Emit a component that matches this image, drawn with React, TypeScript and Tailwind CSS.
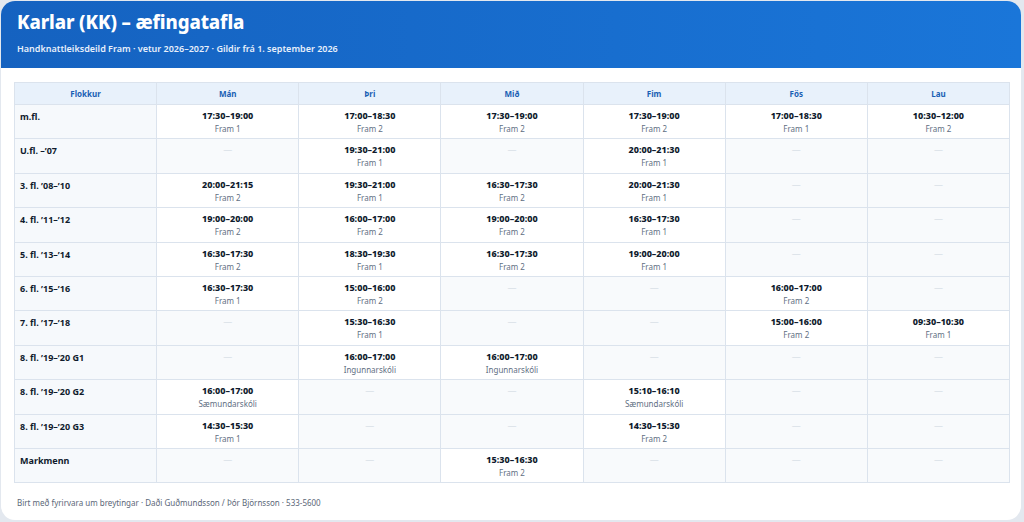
import React from "react";

type Cell = [string, string] | null;

const rows: { label: string; cells: Cell[] }[] = [
  {
    label: "m.fl.",
    cells: [
      ["17:30–19:00", "Fram 1"],
      ["17:00–18:30", "Fram 2"],
      ["17:30–19:00", "Fram 2"],
      ["17:30–19:00", "Fram 2"],
      ["17:00–18:30", "Fram 1"],
      ["10:30–12:00", "Fram 2"],
    ],
  },
  {
    label: "U.fl. –’07",
    cells: [null, ["19:30–21:00", "Fram 1"], null, ["20:00–21:30", "Fram 1"], null, null],
  },
  {
    label: "3. fl. ’08–’10",
    cells: [
      ["20:00–21:15", "Fram 2"],
      ["19:30–21:00", "Fram 1"],
      ["16:30–17:30", "Fram 2"],
      ["20:00–21:30", "Fram 1"],
      null,
      null,
    ],
  },
  {
    label: "4. fl. ’11–’12",
    cells: [
      ["19:00–20:00", "Fram 2"],
      ["16:00–17:00", "Fram 2"],
      ["19:00–20:00", "Fram 2"],
      ["16:30–17:30", "Fram 1"],
      null,
      null,
    ],
  },
  {
    label: "5. fl. ’13–’14",
    cells: [
      ["16:30–17:30", "Fram 2"],
      ["18:30–19:30", "Fram 1"],
      ["16:30–17:30", "Fram 2"],
      ["19:00–20:00", "Fram 1"],
      null,
      null,
    ],
  },
  {
    label: "6. fl. ’15–’16",
    cells: [
      ["16:30–17:30", "Fram 1"],
      ["15:00–16:00", "Fram 2"],
      null,
      null,
      ["16:00–17:00", "Fram 2"],
      null,
    ],
  },
  {
    label: "7. fl. ’17–’18",
    cells: [
      null,
      ["15:30–16:30", "Fram 1"],
      null,
      null,
      ["15:00–16:00", "Fram 2"],
      ["09:30–10:30", "Fram 1"],
    ],
  },
  {
    label: "8. fl. ’19–’20 G1",
    cells: [
      null,
      ["16:00–17:00", "Ingunnarskóli"],
      ["16:00–17:00", "Ingunnarskóli"],
      null,
      null,
      null,
    ],
  },
  {
    label: "8. fl. ’19–’20 G2",
    cells: [
      ["16:00–17:00", "Sæmundarskóli"],
      null,
      null,
      ["15:10–16:10", "Sæmundarskóli"],
      null,
      null,
    ],
  },
  {
    label: "8. fl. ’19–’20 G3",
    cells: [["14:30–15:30", "Fram 1"], null, null, ["14:30–15:30", "Fram 2"], null, null],
  },
  {
    label: "Markmenn",
    cells: [null, null, ["15:30–16:30", "Fram 2"], null, null, null],
  },
];

const days = ["Mán", "Þri", "Mið", "Fim", "Fös", "Lau"];

export default function App() {
  return (
    <div
      className="min-h-screen bg-[#e3e8ef] pl-px pt-px"
      style={{ fontFamily: '"Noto Sans", "Open Sans", sans-serif' }}
    >
      <div className="flex h-[519px] w-[1020px] flex-col overflow-hidden rounded-[14px] bg-white">
        <div className="h-[67px] bg-gradient-to-r from-[#1562c0] to-[#1a76d9] px-4 pt-[8px] text-white">
          <h1 className="text-[18.6px] font-extrabold leading-[26px] tracking-[-0.1px]">
            Karlar (KK) – æfingatafla
          </h1>
          <p className="mt-[7px] text-[9px] font-semibold leading-[13px] text-[#e8f0fb]">
            Handknattleiksdeild Fram · vetur 2026–2027 · Gildir frá 1. september 2026
          </p>
        </div>
        <div className="px-[13px] pt-[14px]">
          <table className="w-[996px] table-fixed border-collapse border border-[#dbe3ed]">
            <thead>
              <tr className="h-[22px] bg-[#e8f1fb]">
                <th className="border border-[#dbe3ed] text-center text-[8px] font-bold text-[#1a5fb4]">
                  Flokkur
                </th>
                {days.map((d) => (
                  <th
                    key={d}
                    className="border border-[#dbe3ed] text-center text-[8px] font-bold text-[#1a5fb4]"
                  >
                    {d}
                  </th>
                ))}
              </tr>
            </thead>
            <tbody>
              {rows.map((r) => (
                <tr key={r.label} className="h-[34.4px]">
                  <td className="border border-[#dbe3ed] bg-[#f6f9fc] px-[5px] pt-[6px] align-top text-[9px] font-bold leading-[12px] text-[#0f1b2d]">
                    {r.label}
                  </td>
                  {r.cells.map((c, i) =>
                    c ? (
                      <td
                        key={i}
                        className="border border-[#dbe3ed] bg-white pt-[5px] text-center align-top"
                      >
                        <div className="text-[9px] font-extrabold leading-[12px] text-[#0f1b2d]">
                          {c[0]}
                        </div>
                        <div className="mt-px text-[8px] leading-[11px] text-[#5f6f83]">
                          {c[1]}
                        </div>
                      </td>
                    ) : (
                      <td
                        key={i}
                        className="border border-[#dbe3ed] bg-[#f8fafc] pt-[5px] text-center align-top"
                      >
                        <div className="text-[9px] leading-[12px] text-[#cdd5df]">—</div>
                      </td>
                    )
                  )}
                </tr>
              ))}
            </tbody>
          </table>
        </div>
        <div className="px-4 pt-[14px] text-[8px] leading-[12px] text-[#5b6778]">
          Birt með fyrirvara um breytingar · Daði Guðmundsson / Þór Björnsson · 533-5600
        </div>
      </div>
    </div>
  );
}
